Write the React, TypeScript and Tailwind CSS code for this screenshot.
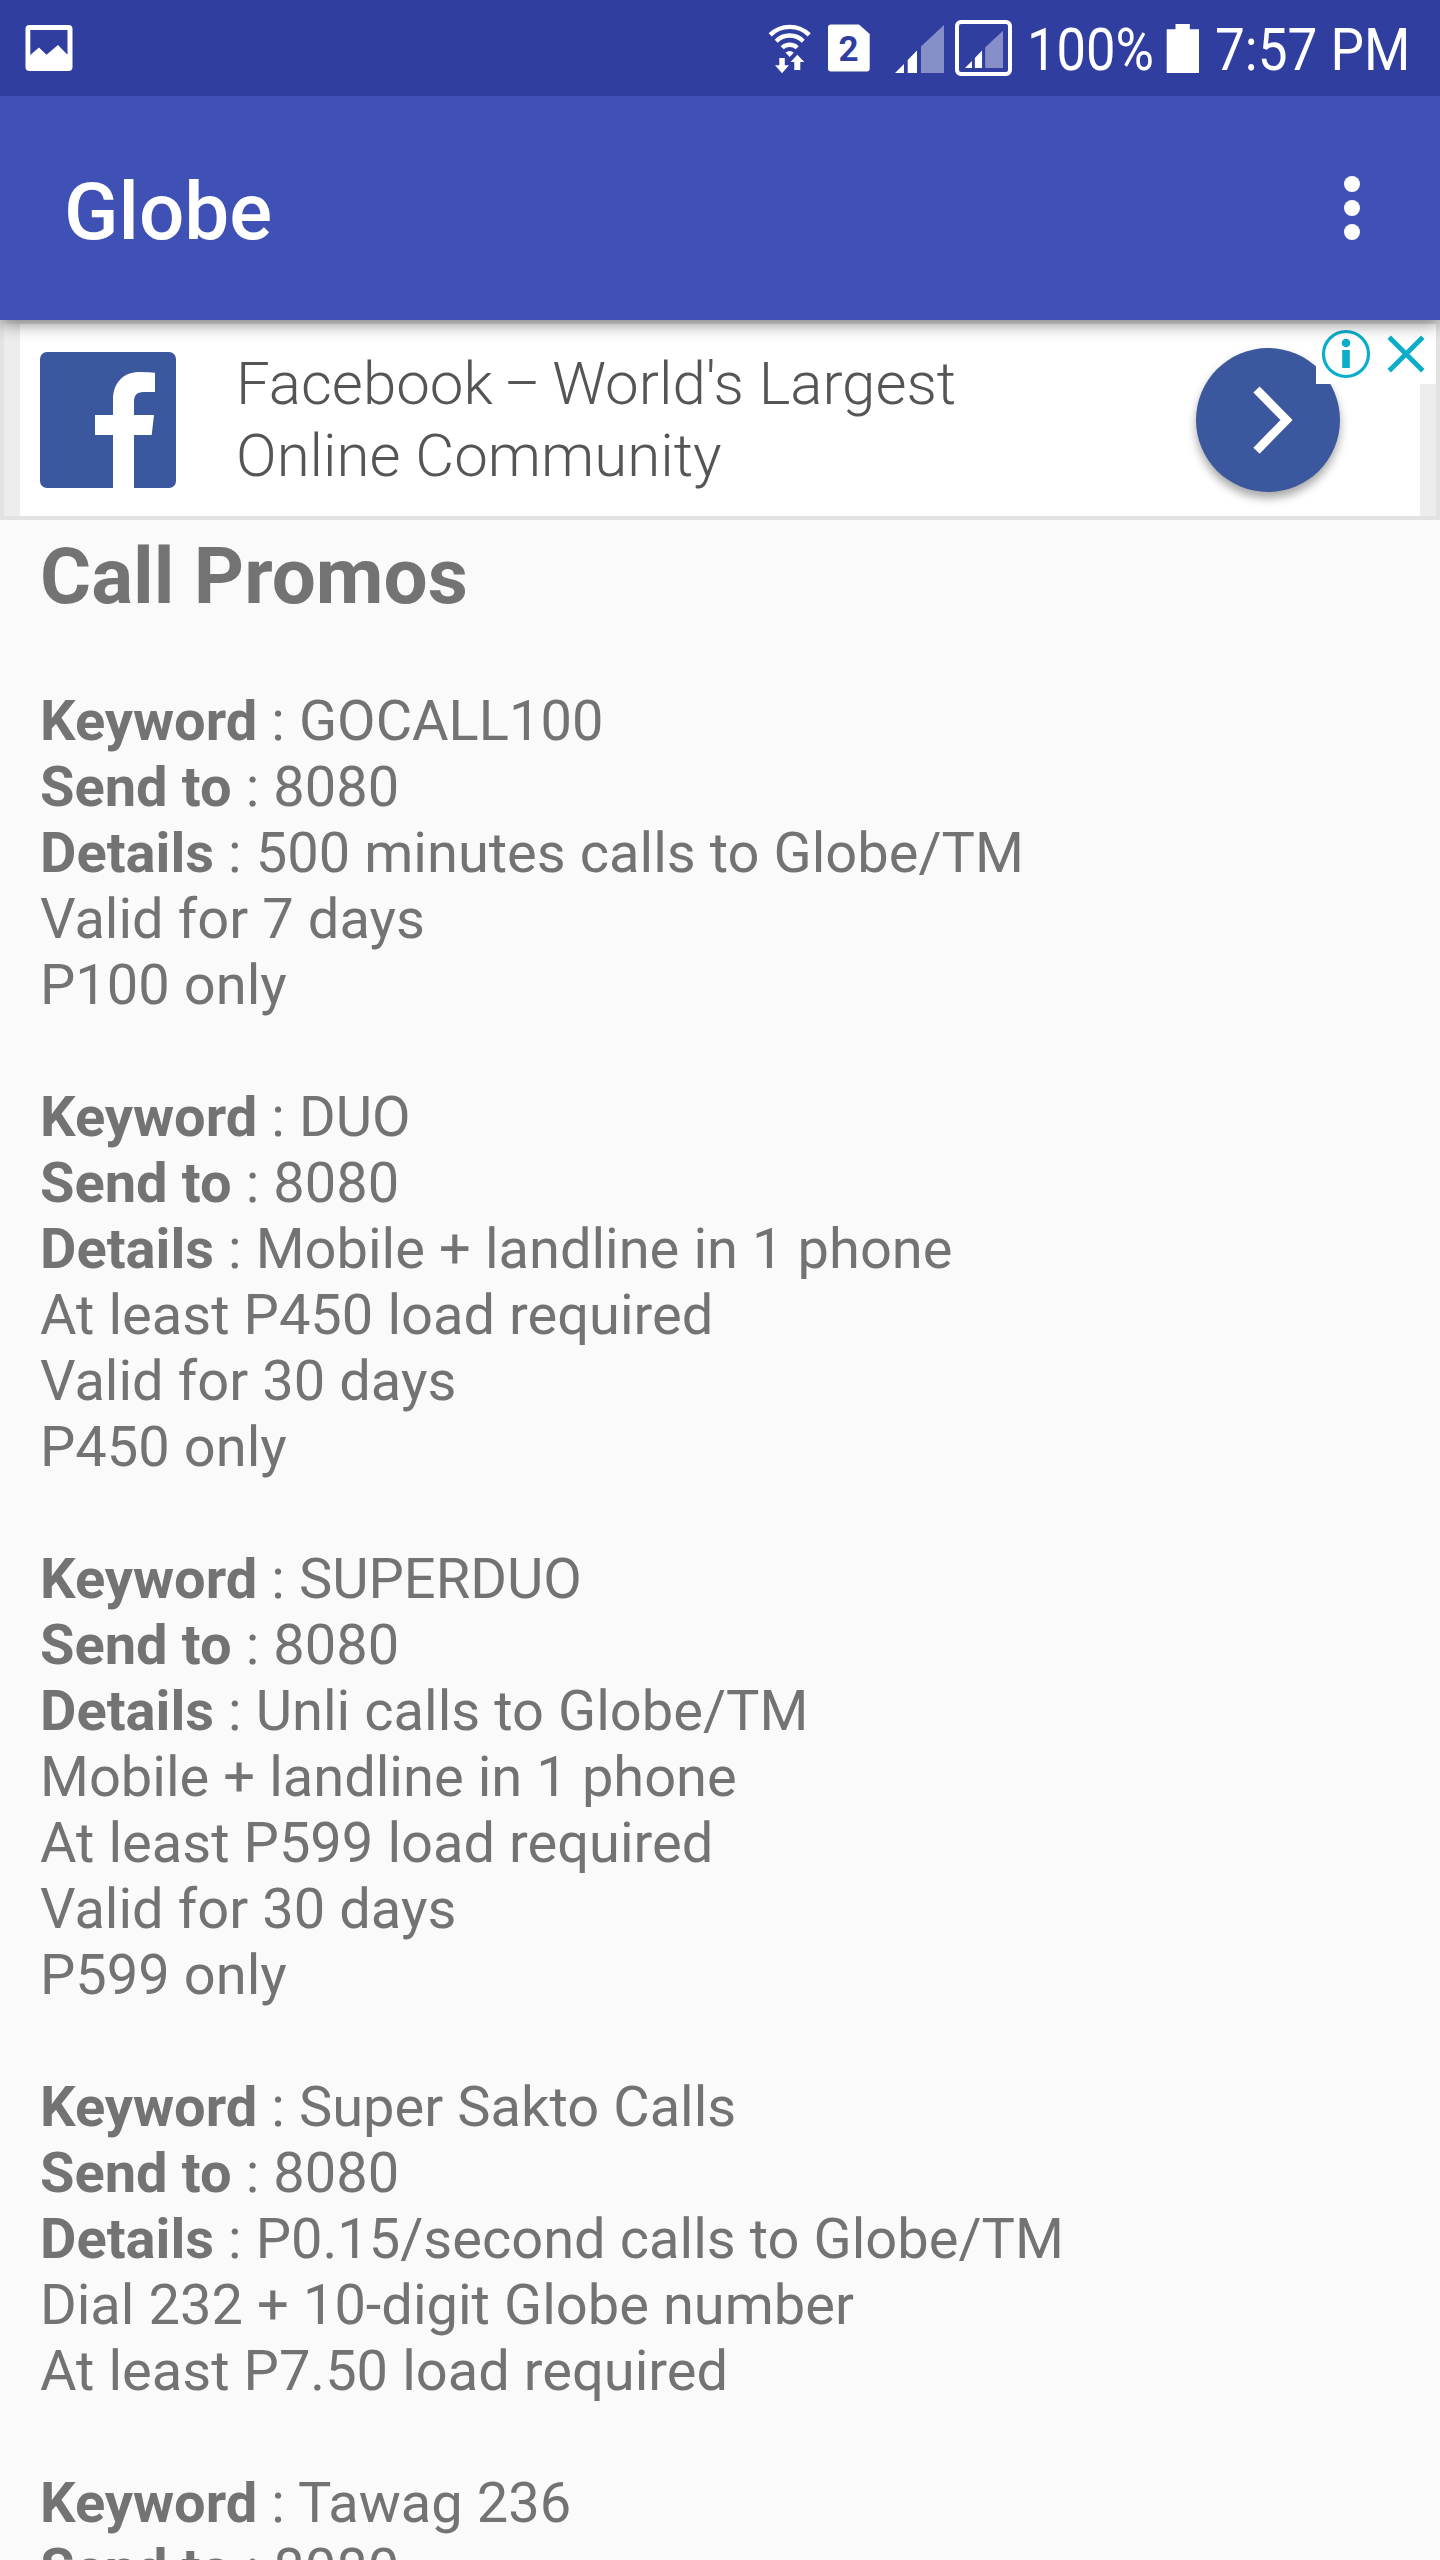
import { Fragment } from "react"

type Promo = {
  keyword: string
  sendTo: string
  details: string[]
}

const promos: Promo[] = [
  {
    keyword: "GOCALL100",
    sendTo: "8080",
    details: ["500 minutes calls to Globe/TM", "Valid for 7 days", "P100 only"],
  },
  {
    keyword: "DUO",
    sendTo: "8080",
    details: [
      "Mobile + landline in 1 phone",
      "At least P450 load required",
      "Valid for 30 days",
      "P450 only",
    ],
  },
  {
    keyword: "SUPERDUO",
    sendTo: "8080",
    details: [
      "Unli calls to Globe/TM",
      "Mobile + landline in 1 phone",
      "At least P599 load required",
      "Valid for 30 days",
      "P599 only",
    ],
  },
  {
    keyword: "Super Sakto Calls",
    sendTo: "8080",
    details: [
      "P0.15/second calls to Globe/TM",
      "Dial 232 + 10-digit Globe number",
      "At least P7.50 load required",
    ],
  },
  {
    keyword: "Tawag 236",
    sendTo: "8080",
    details: [],
  },
]

const PictureIcon = () => (
  <svg className="ml-[25px] h-12 w-12" viewBox="0 0 48 48" fill="#fff">
    <path
      fillRule="evenodd"
      d="M4.5 1h39a4 4 0 0 1 4 4v38a4 4 0 0 1-4 4h-39a4 4 0 0 1-4-4V5a4 4 0 0 1 4-4zM5.3 6v25l8.7-7.5 7.5 7.2L33 21l9.500 9.700V6z"
    />
  </svg>
)

const WifiIcon = () => (
  <svg className="h-[52px] w-[44px]" viewBox="0 0 44 52" fill="none" stroke="#fff" strokeWidth="4.4">
    <path d="M2.200 12.900a27.700 27.700 0 0 1 39 0M8.200 19.200a19 19 0 0 1 27 0M14.200 25.800a10.700 10.700 0 0 1 15 0" />
    <path stroke="none" fill="#fff" d="M17.500 30.500q4.200-3 8.400 0L21.700 35z" />
    <path stroke="none" fill="#fff" d="M11.300 36h5.500v7.300h4.200L14 51.300 7 43.300h4.300z" />
    <path stroke="none" fill="#fff" d="M29.300 32.700l7 7.300h-4v8h-6v-8h-3.700z" />
  </svg>
)

// bars are drawn on a 49x49 grid, shared by both sims
const SignalBars = ({ className }: { className: string }) => (
  <svg className={className} viewBox="0 0 49 49" preserveAspectRatio="none" fill="#fff">
    <path d="M0 49l9-9v9zM12.700 49V36l9.300-9.500V49z" />
    <path fillOpacity=".42" d="M26 49V22.500L49 1v48z" />
  </svg>
)

const StatusBar = () => (
  <div className="relative z-20 flex h-24 items-center bg-[#303f9f] text-[60px] leading-[70px] text-white">
    <PictureIcon />
    <div className="ml-[695px] flex h-full items-center">
      <WifiIcon />
      <svg className="ml-[16px] h-[48px] w-[42px]" viewBox="0 0 42 48">
        <path fill="#fff" d="M3 .500h28L41.700 10v34.500a3 3 0 0 1-3 3H3a3 3 0 0 1-3-3v-41a3 3 0 0 1 3-3z" />
        <text x="20.500" y="37" textAnchor="middle" fill="#303f9f" fontSize="35" fontWeight="700" fontFamily="Roboto">
          2
        </text>
      </svg>
      <SignalBars className="ml-[25px] h-[49px] w-[49px] shrink-0" />
      <div className="ml-[11px] flex h-14 w-[57px] shrink-0 items-center justify-center rounded-[6px] border-4 border-white">
        <SignalBars className="mt-[2px] h-[38px] w-[38px] shrink-0" />
      </div>
      <div className="ml-[15px] mt-[4px] w-[128px] shrink-0">
        <span className="inline-block origin-left scale-x-[.875] whitespace-nowrap">100%</span>
      </div>
      <svg className="ml-[11px] h-[49px] w-[33px] shrink-0" viewBox="0 0 33 49" fill="#fff">
        <path d="M9.500 0h14.300v5.300H33V49H.700V5.300h8.800z" />
      </svg>
      <div className="ml-[16px] mt-[4px] w-[200px] shrink-0">
        <span className="inline-block origin-left scale-x-[.885] whitespace-nowrap">7:57 PM</span>
      </div>
    </div>
  </div>
)

const AppBar = () => (
  <header className="relative z-10 flex h-56 items-center justify-between bg-[#3f51b5] pl-16 pr-20 text-white shadow-[0_4px_16px_rgba(0,0,0,0.45)]">
    <h1 className="pt-[7px] text-[80px] leading-[94px] font-medium">Globe</h1>
    <div className="flex flex-col gap-2">
      <span className="h-4 w-4 rounded-full bg-white" />
      <span className="h-4 w-4 rounded-full bg-white" />
      <span className="h-4 w-4 rounded-full bg-white" />
    </div>
  </header>
)

const AdBanner = () => (
  <section className="relative h-[200px] border-4 border-[#e3e3e3] bg-[#ededed] px-4">
    <div className="flex h-full items-start bg-white pl-5 pt-7">
      <svg className="h-[136px] w-[136px] shrink-0" viewBox="0 0 136 136">
        <rect width="136" height="136" rx="7" fill="#3b579d" />
        <path
          fill="#fff"
          d="M73 136V83H55V63h18V48c0-18 11-28 27-28q9 0 15 .700V40h-11c-8 0-10 4-10 10v13h20l-2.300 20H94v53z"
        />
      </svg>
      <p className="-mt-1 ml-[60px] w-[860px] whitespace-nowrap text-[60px] leading-[72px] font-light text-[#555]">
        Facebook <span className="-ml-[3px] -mr-[6px] inline-block origin-left scale-x-[.93]">–</span> World's Largest
        <br />
        Online Community
      </p>
      <div className="-mt-1 ml-[100px] h-36 w-36 shrink-0 rounded-full bg-[#3b579d] shadow-[0_6px_10px_rgba(0,0,0,0.35)]">
        <svg className="h-36 w-36" viewBox="0 0 144 144" fill="none" stroke="#fff" strokeWidth="8.700">
          <path d="M60.500 41.500L90.500 72l-30 30.700" />
        </svg>
      </div>
    </div>
    <div className="absolute top-0 right-0 h-[60px] w-[120px] bg-white">
      <svg className="h-[60px] w-[120px]" viewBox="0 0 120 60" fill="none" stroke="#0aaecb">
        <circle cx="30" cy="30" r="22.500" strokeWidth="3.200" />
        <circle cx="30" cy="19" r="4.300" fill="#0aaecb" stroke="none" />
        <path d="M30 26v18" strokeWidth="7.600" />
        <path d="M73.200 13.200l33.600 33.600M106.800 13.200L73.200 46.800" strokeWidth="4.800" />
      </svg>
    </div>
  </section>
)

const App = () => {
  return (
    <div className="h-[2560px] w-[1440px] overflow-hidden bg-[#fafafa] font-[Roboto,sans-serif]">
      <StatusBar />
      <AppBar />
      <AdBanner />
      <main className="px-10 pt-[10px] text-[56px] leading-[66px] text-[#737373] [word-spacing:0.2px]">
        <h2 className="mb-[66px] text-[78.2px] leading-[92px] font-bold [word-spacing:0px]">Call Promos</h2>
        {promos.map((promo) => (
          <div key={promo.keyword} className="mb-[66px]">
            <p>
              <b>Keyword</b> : {promo.keyword}
            </p>
            <p>
              <b>Send to</b> : {promo.sendTo}
            </p>
            {promo.details.length > 0 && (
              <p>
                <b>Details</b> :{" "}
                {promo.details.map((line) => (
                  <Fragment key={line}>
                    {line}
                    <br />
                  </Fragment>
                ))}
              </p>
            )}
          </div>
        ))}
      </main>
    </div>
  )
}

export default App
